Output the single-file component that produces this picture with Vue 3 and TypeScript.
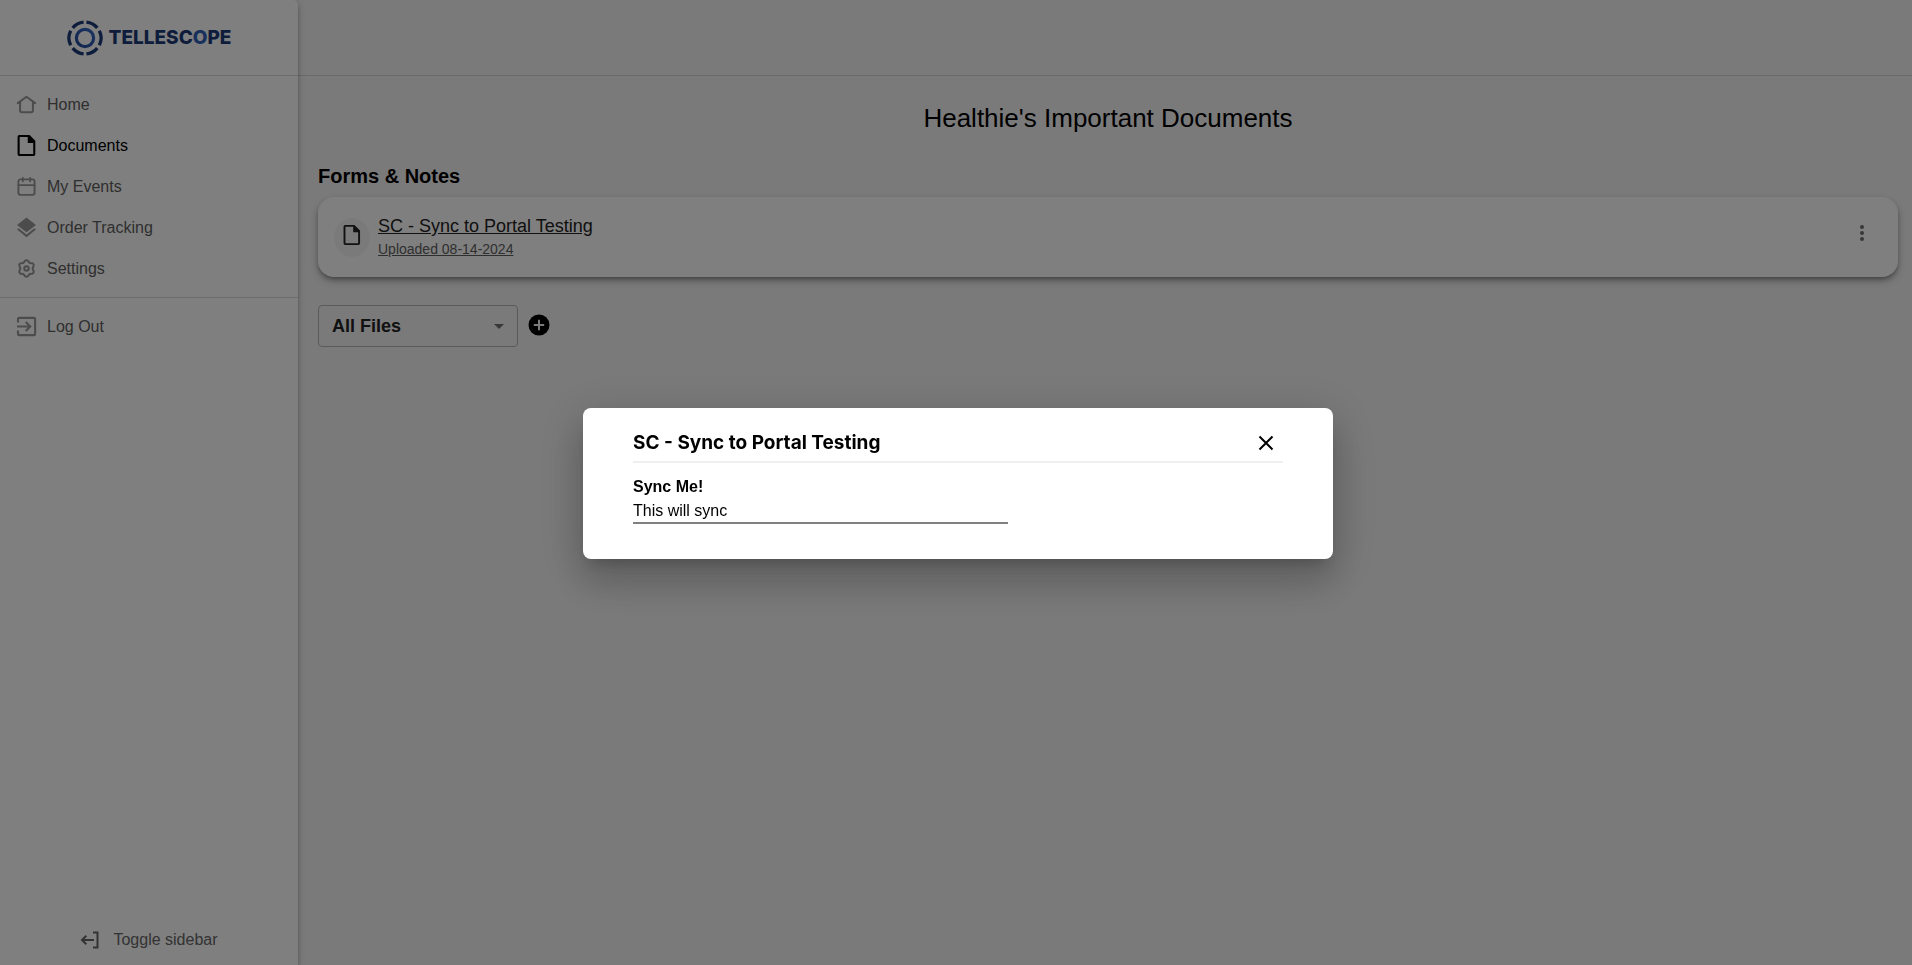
<script setup lang="ts">
import { ref } from 'vue'

type IconName = 'home' | 'file' | 'calendar' | 'layers' | 'gear' | 'logout'

interface NavItem {
  label: string
  icon: IconName
  active?: boolean
}

const navItems: NavItem[] = [
  { label: 'Home', icon: 'home' },
  { label: 'Documents', icon: 'file', active: true },
  { label: 'My Events', icon: 'calendar' },
  { label: 'Order Tracking', icon: 'layers' },
  { label: 'Settings', icon: 'gear' },
]

const documents = [{ title: 'SC - Sync to Portal Testing', uploaded: '08-14-2024' }]
const filter = ref('All Files')
const answer = ref('This will sync')
const open = ref(true)
</script>

<template>
  <div class="app">
    <aside class="sidebar">
      <div class="brand">
        <svg class="brand-mark" viewBox="0 0 36 36" aria-hidden="true">
          <defs>
            <linearGradient id="ring" x1="0" y1="1" x2="1" y2="0">
              <stop offset="0" stop-color="#234a9c" />
              <stop offset="1" stop-color="#3468c4" />
            </linearGradient>
          </defs>
          <circle cx="18" cy="18" r="8.6" fill="none" stroke="url(#ring)" stroke-width="3.2" />
          <g fill="none" stroke="#1c3a78" stroke-width="3.3">
            <path d="M19.4 2.1A16 16 0 0 1 30.3 7.900" />
            <path d="M32.300 10.700A16 16 0 0 1 32.300 25.300" />
            <path d="M30.300 28.100A16 16 0 0 1 19.400 33.900" />
            <path d="M16.600 33.900A16 16 0 0 1 5.700 28.100" />
            <path d="M3.700 25.300A16 16 0 0 1 3.700 10.700" />
            <path d="M5.700 7.900A16 16 0 0 1 16.600 2.100" />
          </g>
        </svg>
        <span class="brand-name">TELLESC<span class="brand-o">O</span>PE</span>
      </div>
      <nav class="nav">
        <a v-for="item in navItems" :key="item.label" href="#" class="nav-item" :class="{ active: item.active }">
          <svg class="icon" viewBox="0 0 20 20" aria-hidden="true">
            <g v-if="item.icon === 'home'" fill="none" stroke="currentColor" stroke-width="1.9" stroke-linecap="round" stroke-linejoin="round">
              <path d="M1.700 8.700 10 2.600l8.300 6.100M3.900 7.800v8q0 1.600 1.600 1.600h9q1.600 0 1.600-1.600V7.800" />
            </g>
            <g v-else-if="item.icon === 'file'">
              <path fill="none" stroke="currentColor" stroke-width="2" stroke-linejoin="round" d="M3.500.9h9L17.400 6v12.100q0 1-1 1H3.500q-1 0-1-1V1.900q0-1 1-1z" />
              <path fill="currentColor" d="M11.200 1h1.500L17.500 6v1.500h-6.300z" />
            </g>
            <g v-else-if="item.icon === 'calendar'" fill="none" stroke="currentColor" stroke-width="1.8" stroke-linecap="round">
              <rect x="2.300" y="3.200" width="15.400" height="14.800" rx="2" />
              <path d="M2.300 8.700h15.400M6.500 1.800v3.300M13.500 1.800v3.300" />
            </g>
            <g v-else-if="item.icon === 'layers'" fill="currentColor">
              <path d="M10 .4 19 7.500 10 14.500 1 7.500z" />
              <path d="m1 12 1.500-1.200L10 16.700l7.500-5.900L19 12l-9 7.200z" />
            </g>
            <g v-else fill="none" stroke="currentColor" stroke-width="1.900" stroke-linejoin="round">
              <path d="M8.400 2.800Q10 1.400 11.600 2.800L12.900 4.700 15.200 4.900Q17.200 5.500 16.800 7.600L15.800 10 16.800 12.400Q17.200 14.500 15.200 15.100L12.900 15.300 11.600 17.200Q10 18.600 8.400 17.200L7.100 15.300 4.800 15.100Q2.800 14.500 3.200 12.400L4.200 10 3.200 7.600Q2.800 5.500 4.800 4.900L7.100 4.700z" />
              <circle cx="10" cy="10" r="2.100" stroke-width="2" />
            </g>
          </svg>
          <span>{{ item.label }}</span>
        </a>
      </nav>
      <div class="nav nav-account">
        <a href="#" class="nav-item">
          <svg class="icon" viewBox="0 0 20 20" aria-hidden="true">
            <g fill="none" stroke="currentColor" stroke-width="2">
              <path d="M1.900 6.300V2.900q0-1.100 1.100-1.100h14.100q1.100 0 1.100 1.100v14.200q0 1.100-1.100 1.100H3q-1.100 0-1.100-1.100v-3.400" />
              <path d="M1 10h12.500M9.300 5.700l4.300 4.300-4.300 4.300" />
            </g>
          </svg>
          <span>Log Out</span>
        </a>
      </div>
      <button type="button" class="toggle">
        <svg class="icon" viewBox="0 0 20 20" aria-hidden="true">
          <g fill="none" stroke="currentColor" stroke-width="2">
            <path d="M13 2.500h4.500v15H13" />
            <path d="M14 10H2M6.300 5.700 2 10l4.300 4.300" />
          </g>
        </svg>
        <span>Toggle sidebar</span>
      </button>
    </aside>

    <div class="page">
      <header class="topbar"></header>
      <main class="content">
        <h1 class="title">Healthie's Important Documents</h1>
        <h2 class="section">Forms &amp; Notes</h2>
        <article v-for="doc in documents" :key="doc.title" class="card">
          <span class="avatar">
            <svg class="icon" viewBox="0 0 20 20" aria-hidden="true">
              <path fill="none" stroke="currentColor" stroke-width="1.900" stroke-linejoin="round" d="M3.500.9h8.500L17.100 6v12.100q0 1-1 1H3.500q-1 0-1-1V1.900q0-1 1-1z" />
              <path fill="currentColor" d="M11.200 1h1L17.100 6v1.200h-5.900z" />
            </svg>
          </span>
          <a href="#" class="doc">
            <span class="doc-title">{{ doc.title }}</span>
            <span class="doc-date">Uploaded {{ doc.uploaded }}</span>
          </a>
          <button type="button" class="more" aria-label="More options">
            <svg class="icon" viewBox="0 0 20 20" fill="currentColor" aria-hidden="true">
              <circle cx="10" cy="4" r="2" />
              <circle cx="10" cy="10" r="2" />
              <circle cx="10" cy="16" r="2" />
            </svg>
          </button>
        </article>
        <div class="filters">
          <div class="select-box">
            <select v-model="filter" class="select" aria-label="File filter">
              <option>All Files</option>
            </select>
            <svg class="arrow" viewBox="0 0 10 5" aria-hidden="true"><path fill="currentColor" d="M0 0h10L5 5z" /></svg>
          </div>
          <button type="button" class="add" aria-label="Add file">
            <svg viewBox="0 0 22 22" aria-hidden="true">
              <circle cx="11" cy="11" r="10.500" fill="#000" />
              <path d="M11 5.800v10.400M5.800 11h10.400" stroke="#f4f4f4" stroke-width="2" />
            </svg>
          </button>
        </div>
      </main>
    </div>

    <div v-if="open" class="backdrop">
      <section class="dialog" role="dialog" aria-modal="true" aria-labelledby="dialog-title">
        <div class="dialog-head">
          <h2 id="dialog-title" class="dialog-title">SC - Sync to Portal Testing</h2>
          <button type="button" class="close" aria-label="Close" @click="open = false">
            <svg viewBox="0 0 16 16" aria-hidden="true">
              <path d="M1.500 1.500l13 13M14.500 1.500l-13 13" stroke="#000" stroke-width="2" />
            </svg>
          </button>
        </div>
        <label for="sync-answer" class="field-label">Sync Me!</label>
        <input id="sync-answer" v-model="answer" class="field" type="text" readonly />
      </section>
    </div>
  </div>
</template>

<style>
body {
  margin: 0;
}
</style>

<style scoped>
* {
  box-sizing: border-box;
}
.app {
  display: flex;
  min-height: 100vh;
  background: #f4f4f4;
  color: #000;
  font-family: "Liberation Sans", Helvetica, Arial, sans-serif;
  font-size: 16px;
}
a {
  color: inherit;
}
button {
  padding: 0;
  border: 0;
  background: none;
  font: inherit;
  cursor: pointer;
}
svg {
  display: block;
}
.sidebar {
  z-index: 1;
  display: flex;
  flex: 0 0 298px;
  flex-direction: column;
  border-radius: 0 5px 0 0;
  background: #fff;
  box-shadow: 0 2px 4px -1px rgba(0, 0, 0, 0.2), 0 4px 5px rgba(0, 0, 0, 0.14), 0 1px 10px rgba(0, 0, 0, 0.12);
}
.brand {
  display: flex;
  align-items: center;
  justify-content: center;
  gap: 6px;
  height: 76px;
  border-bottom: 1px solid #d8d8d8;
}
.brand-mark {
  width: 36px;
  height: 36px;
}
.brand-name {
  color: #1c3a78;
  font: 800 19px/24px Inter, sans-serif;
}
.brand-o {
  color: #2f60b8;
}
.nav {
  padding: 8px 0;
}
.nav-account {
  border-top: 1px solid #d8d8d8;
}
.nav-item {
  display: flex;
  align-items: center;
  gap: 10px;
  height: 41px;
  padding: 0 16px;
  color: #5e5e5e;
  text-decoration: none;
}
.nav-item .icon {
  color: #989898;
}
.nav-item.active,
.nav-item.active .icon {
  color: #000;
}
.icon {
  flex: none;
  width: 20px;
  height: 20px;
}
.nav-item .icon {
  width: 21px;
  height: 21px;
}
.toggle {
  display: flex;
  align-items: center;
  justify-content: center;
  gap: 13px;
  height: 50px;
  margin-top: auto;
  color: #666;
}
.page {
  flex: 1;
  min-width: 0;
}
.topbar {
  height: 76px;
  border-bottom: 1px solid #d4d4d4;
}
.content {
  padding: 26px 14px 26px 20px;
}
.title {
  margin: 0;
  font-size: 26px;
  font-weight: 400;
  line-height: 32px;
  text-align: center;
}
.section {
  margin: 30px 0 9px;
  font-size: 20px;
  line-height: 24px;
}
.card {
  display: flex;
  align-items: center;
  gap: 8px;
  height: 80px;
  padding: 0 26px 0 16px;
  border-radius: 16px;
  background: #fff;
  box-shadow: 0 3px 5px -1px rgba(0, 0, 0, 0.35), 0 4px 8px rgba(0, 0, 0, 0.2);
}
.avatar {
  display: grid;
  place-items: center;
  width: 36px;
  height: 39px;
  padding-bottom: 4px;
  border-radius: 50%;
  background: #f4f4f4;
  color: #222;
}
.doc {
  display: flex;
  flex: 1;
  flex-direction: column;
  text-decoration: none;
}
.doc span {
  text-decoration: underline;
}
.doc-title {
  color: #222;
  font-size: 18px;
  line-height: 24px;
}
.doc-date {
  color: #5e5e5e;
  font-size: 14px;
  line-height: 22px;
}
.more {
  padding-bottom: 8px;
  color: #707070;
}
.filters {
  display: flex;
  align-items: center;
  gap: 10px;
  margin-top: 28px;
}
.select-box {
  position: relative;
  width: 200px;
}
.select {
  width: 100%;
  height: 42px;
  padding: 0 32px 0 13px;
  appearance: none;
  border: 1px solid #b4b4b4;
  border-radius: 4px;
  background: transparent;
  color: #222;
  font: 700 18px/24px "Liberation Sans", Arial, sans-serif;
}
.arrow {
  position: absolute;
  top: 19px;
  right: 14px;
  width: 10px;
  height: 5px;
  color: #707070;
  pointer-events: none;
}
.add {
  padding-bottom: 3px;
}
.add svg {
  width: 22px;
  height: 22px;
}
.backdrop {
  position: fixed;
  inset: 0;
  z-index: 2;
  display: flex;
  align-items: center;
  justify-content: center;
  padding: 2px 0 0 4px;
  background: rgba(0, 0, 0, 0.5);
}
.dialog {
  width: 750px;
  max-width: 100%;
  padding: 16px 50px 35px;
  border-radius: 8px;
  background: #fff;
  box-shadow: 0 11px 15px -7px rgba(0, 0, 0, 0.2), 0 24px 38px 3px rgba(0, 0, 0, 0.14), 0 9px 46px 8px rgba(0, 0, 0, 0.12);
}
.dialog-head {
  display: flex;
  align-items: center;
  justify-content: space-between;
  height: 39px;
  padding-right: 9px;
  border-bottom: 2px solid #efefef;
}
.dialog-title {
  margin: 0;
  font: 700 19px/24px Inter, sans-serif;
}
.close svg {
  width: 16px;
  height: 16px;
}
.field-label {
  display: block;
  margin-top: 12px;
  font-weight: 700;
  line-height: 24px;
}
.field {
  display: block;
  width: calc(50% + 50px);
  height: 25px;
  padding: 0;
  border: 0;
  border-bottom: 2px solid #808080;
  border-radius: 0;
  outline: 0;
  background: transparent;
  color: #000;
  font: 400 16px/24px "Liberation Sans", Arial, sans-serif;
}
</style>
